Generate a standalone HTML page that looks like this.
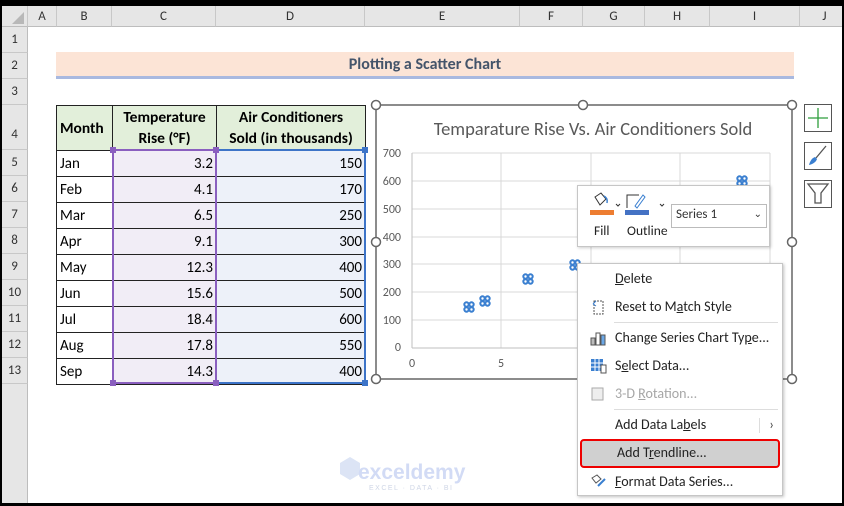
<!DOCTYPE html>
<html><head><meta charset="utf-8"><style>
*{margin:0;padding:0;box-sizing:border-box}
body{width:844px;height:506px;overflow:hidden;background:#000;font-family:Calibri,Carlito,"Liberation Sans",sans-serif;position:relative}
.a{position:absolute}
#sheet{position:absolute;left:2px;top:6px;width:840px;height:497px;background:#fff;overflow:hidden}
.ch{position:absolute;top:0;height:21px;background:#e6e6e6;border-right:1px solid #c8c8c8;border-bottom:1px solid #bdbdbd;font-size:13px;color:#333;text-align:center;line-height:21px}
.rh{position:absolute;left:0;width:26px;background:#e6e6e6;border-bottom:1px solid #c8c8c8;border-right:1px solid #bdbdbd;font-size:13px;color:#333;text-align:center}
td{border:1px solid #222;font-size:15px;padding:0 3px;height:26px}
.ml{font-size:14px;color:#222;padding-left:37px;height:28px;line-height:28px;position:relative}
.ml svg{position:absolute;left:12px;top:6px}
</style></head><body>
<div id="sheet">
<div class="ch" style="left:0;width:26px"></div>
<div class="a" style="left:10px;top:6px;width:0;height:0;border-left:12px solid transparent;border-bottom:12px solid #b8b8b8"></div>
<div class="ch" style="left:26px;width:29px">A</div>
<div class="ch" style="left:55px;width:55px">B</div>
<div class="ch" style="left:110px;width:104px">C</div>
<div class="ch" style="left:214px;width:149px">D</div>
<div class="ch" style="left:363px;width:155px">E</div>
<div class="ch" style="left:518px;width:63px">F</div>
<div class="ch" style="left:581px;width:62px">G</div>
<div class="ch" style="left:643px;width:65px">H</div>
<div class="ch" style="left:708px;width:90px">I</div>
<div class="ch" style="left:798px;width:50px">J</div>
<div class="rh" style="top:21px;height:497px;border-bottom:none"></div>
<div class="rh" style="top:21px;height:26px;line-height:26px">1</div>
<div class="rh" style="top:47px;height:26px;line-height:26px">2</div>
<div class="rh" style="top:73px;height:26px;line-height:26px">3</div>
<div class="rh" style="top:99px;height:45px;line-height:60px">4</div>
<div class="rh" style="top:144px;height:26px;line-height:26px">5</div>
<div class="rh" style="top:170px;height:26px;line-height:26px">6</div>
<div class="rh" style="top:196px;height:26px;line-height:26px">7</div>
<div class="rh" style="top:222px;height:26px;line-height:26px">8</div>
<div class="rh" style="top:248px;height:26px;line-height:26px">9</div>
<div class="rh" style="top:274px;height:26px;line-height:26px">10</div>
<div class="rh" style="top:300px;height:26px;line-height:26px">11</div>
<div class="rh" style="top:326px;height:26px;line-height:26px">12</div>
<div class="rh" style="top:352px;height:26px;line-height:26px">13</div>
<div class="a" style="left:54px;top:46px;width:738px;height:27px;background:#fce4d6;border-bottom:3px solid #a9b9e0;text-align:center;font-weight:bold;font-size:16px;color:#44546a;line-height:25px">Plotting a Scatter Chart</div>
<table class="a" style="left:54px;top:99px;border-collapse:collapse">
<tr style="background:#e2efda;font-weight:bold"><td style="width:56px;height:45px;font-size:15.5px">Month</td><td style="width:104px;text-align:center;line-height:21px;font-size:15.5px">Temperature<br>Rise (°F)</td><td style="width:149px;text-align:center;line-height:21px;font-size:15.5px">Air Conditioners<br>Sold (in thousands)</td></tr>
<tr><td>Jan</td><td style="text-align:right;background:#f1edf6">3.2</td><td style="text-align:right;background:#edf1f9">150</td></tr>
<tr><td>Feb</td><td style="text-align:right;background:#f1edf6">4.1</td><td style="text-align:right;background:#edf1f9">170</td></tr>
<tr><td>Mar</td><td style="text-align:right;background:#f1edf6">6.5</td><td style="text-align:right;background:#edf1f9">250</td></tr>
<tr><td>Apr</td><td style="text-align:right;background:#f1edf6">9.1</td><td style="text-align:right;background:#edf1f9">300</td></tr>
<tr><td>May</td><td style="text-align:right;background:#f1edf6">12.3</td><td style="text-align:right;background:#edf1f9">400</td></tr>
<tr><td>Jun</td><td style="text-align:right;background:#f1edf6">15.6</td><td style="text-align:right;background:#edf1f9">500</td></tr>
<tr><td>Jul</td><td style="text-align:right;background:#f1edf6">18.4</td><td style="text-align:right;background:#edf1f9">600</td></tr>
<tr><td>Aug</td><td style="text-align:right;background:#f1edf6">17.8</td><td style="text-align:right;background:#edf1f9">550</td></tr>
<tr><td>Sep</td><td style="text-align:right;background:#f1edf6">14.3</td><td style="text-align:right;background:#edf1f9">400</td></tr>
</table>
<div class="a" style="left:110px;top:143px;width:105px;height:235px;border:2px solid #8a5fbf"></div>
<div class="a" style="left:214px;top:143px;width:150px;height:235px;border:2px solid #3d74c8;border-left:none"></div>
<div class="a" style="left:108px;top:141px;width:6px;height:6px;background:#8a5fbf"></div>
<div class="a" style="left:211px;top:141px;width:6px;height:6px;background:#8a5fbf"></div>
<div class="a" style="left:108px;top:374px;width:6px;height:6px;background:#8a5fbf"></div>
<div class="a" style="left:211px;top:374px;width:6px;height:6px;background:#8a5fbf"></div>
<div class="a" style="left:360px;top:141px;width:6px;height:6px;background:#3d74c8"></div>
<div class="a" style="left:360px;top:374px;width:6px;height:6px;background:#3d74c8"></div>
</div>

<svg class="a" style="left:0;top:0" width="844" height="506">
<rect x="376" y="105" width="416" height="274" fill="#fff" stroke="#666" stroke-width="1.5"/>
<text x="593" y="135" font-size="18.5" fill="#595959" text-anchor="middle" font-family="Calibri,Carlito,Liberation Sans,sans-serif">Temparature Rise Vs. Air Conditioners Sold</text>
<g stroke="#d9d9d9" stroke-width="1">
<line x1="412" y1="153" x2="770" y2="153"/><line x1="412" y1="181" x2="770" y2="181"/><line x1="412" y1="209" x2="770" y2="209"/><line x1="412" y1="237" x2="770" y2="237"/><line x1="412" y1="264" x2="770" y2="264"/><line x1="412" y1="292" x2="770" y2="292"/><line x1="412" y1="320" x2="770" y2="320"/>
<line x1="501" y1="153" x2="501" y2="348"/><line x1="591" y1="153" x2="591" y2="348"/><line x1="680" y1="153" x2="680" y2="348"/><line x1="770" y1="153" x2="770" y2="348"/>
</g>
<line x1="412" y1="153" x2="412" y2="348" stroke="#bfbfbf"/><line x1="412" y1="348" x2="770" y2="348" stroke="#bfbfbf"/>
<g font-size="12" fill="#595959" text-anchor="end" font-family="Calibri,Carlito,Liberation Sans,sans-serif">
<text x="401" y="157">700</text><text x="401" y="185">600</text><text x="401" y="213">500</text><text x="401" y="241">400</text><text x="401" y="268">300</text><text x="401" y="296">200</text><text x="401" y="324">100</text><text x="401" y="351">0</text>
</g>
<g font-size="12" fill="#595959" text-anchor="middle" font-family="Calibri,Carlito,Liberation Sans,sans-serif"><text x="412" y="367">0</text><text x="501" y="367">5</text></g>
<g fill="none" stroke="#3a7fd0" stroke-width="2">
<g transform="translate(469,307)"><circle cx="-2.5" cy="-2.5" r="2.2"/><circle cx="2.5" cy="-2.5" r="2.2"/><circle cx="-2.5" cy="2.5" r="2.2"/><circle cx="2.5" cy="2.5" r="2.2"/></g>
<g transform="translate(485,301)"><circle cx="-2.5" cy="-2.5" r="2.2"/><circle cx="2.5" cy="-2.5" r="2.2"/><circle cx="-2.5" cy="2.5" r="2.2"/><circle cx="2.5" cy="2.5" r="2.2"/></g>
<g transform="translate(528,279)"><circle cx="-2.5" cy="-2.5" r="2.2"/><circle cx="2.5" cy="-2.5" r="2.2"/><circle cx="-2.5" cy="2.5" r="2.2"/><circle cx="2.5" cy="2.5" r="2.2"/></g>
<g transform="translate(575,265)"><circle cx="-2.5" cy="-2.5" r="2.2"/><circle cx="2.5" cy="-2.5" r="2.2"/><circle cx="-2.5" cy="2.5" r="2.2"/><circle cx="2.5" cy="2.5" r="2.2"/></g>
<g transform="translate(742,181)"><circle cx="-2.5" cy="-2.5" r="2.2"/><circle cx="2.5" cy="-2.5" r="2.2"/><circle cx="-2.5" cy="2.5" r="2.2"/><circle cx="2.5" cy="2.5" r="2.2"/></g>
</g>
<g fill="#fff" stroke="#666" stroke-width="1.5">
<circle cx="376" cy="105" r="4.5"/><circle cx="583" cy="105" r="4.5"/><circle cx="792" cy="105" r="4.5"/>
<circle cx="376" cy="242" r="4.5"/><circle cx="792" cy="242" r="4.5"/>
<circle cx="376" cy="379" r="4.5"/><circle cx="792" cy="379" r="4.5"/>
</g>
<g fill="#fff" stroke="#555" stroke-width="1">
<rect x="804.5" y="104.5" width="27" height="27"/><rect x="804.5" y="142.5" width="27" height="27"/><rect x="804.5" y="180.5" width="27" height="27"/>
</g>
<path d="M818 108v20M808 118h20" stroke="#2e9e3c" stroke-width="1.3"/>
<path d="M826 146l-10 12" stroke="#555" stroke-width="1.3"/><path d="M815 157c-3 1-5 4-6 8 4-1 7-3 8-6z" fill="#3a7fd0"/>
<path d="M808 184h20l-7 9v10h-6v-10z" fill="none" stroke="#555" stroke-width="1.3"/>
<path d="M340 463l10-6 10 6v11l-10 6-10-6z" fill="#dce4f5"/>
<text x="358" y="479" font-size="21" font-weight="bold" fill="#d2dbf5" font-family="Liberation Sans,sans-serif">exceldemy</text>
<text x="369" y="490" font-size="7" fill="#cfd6e6" font-family="Liberation Sans,sans-serif" letter-spacing="1.5">EXCEL · DATA · BI</text>
</svg>

<div class="a" style="left:577px;top:185px;width:193px;height:62px;background:#fff;border:1px solid #c6c6c6;box-shadow:1px 1px 3px rgba(0,0,0,.2)">
<svg class="a" style="left:0;top:0" width="193" height="62">
<path d="M17 11l6 -4 5 6-6 6z" fill="none" stroke="#333" stroke-width="1"/><path d="M26 10q4 2 3 7" stroke="#3a7fd0" fill="none" stroke-width="1.5"/>
<path d="M38 18l2 2 2-2" stroke="#333" fill="none"/>
<rect x="12" y="24" width="24" height="5" fill="#ed7d31"/>
<path d="M49 22v-13h12" stroke="#333" fill="none"/><path d="M57 20l8-11 2 2-8 11z" stroke="#3a7fd0" fill="none"/>
<path d="M82 18l2 2 2-2" stroke="#333" fill="none"/>
<rect x="47" y="24" width="24" height="5" fill="#4472c4"/>
</svg>
<div class="a" style="left:16px;top:36px;font-size:13.5px;color:#222">Fill</div>
<div class="a" style="left:49px;top:36px;font-size:13.5px;color:#222">Outline</div>
<div class="a" style="left:93px;top:18px;width:96px;height:24px;border:1px solid #bbb;font-size:13px;color:#333;padding:2px 4px">Series 1<span style="position:absolute;right:4px;top:2px;font-size:10px">⌄</span></div>
</div>

<div class="a" style="left:577px;top:263px;width:206px;height:233px;background:#fff;border:1px solid #c6c6c6;box-shadow:1px 1px 3px rgba(0,0,0,.25);padding-top:1px">
<div class="ml"><u>D</u>elete</div>
<div class="ml"><svg width="16" height="16"><path d="M4 2h9v13H4z" fill="none" stroke="#555" stroke-width="1" stroke-dasharray="2 1"/><path d="M3 5l3-3M3 5l3 2" stroke="#3a7fd0"/></svg>Reset to M<u>a</u>tch Style</div>
<div style="height:1px;background:#ddd;margin:1px 4px 1px 36px"></div>
<div class="ml"><svg width="18" height="16"><rect x="1" y="8" width="4" height="7" fill="#bbb" stroke="#555"/><rect x="6" y="3" width="4" height="12" fill="#fff" stroke="#555"/><rect x="11" y="5" width="4" height="10" fill="#6aa7e6" stroke="#555"/></svg>Change Series Chart Ty<u>p</u>e...</div>
<div class="ml"><svg width="18" height="16"><rect x="1" y="1" width="12" height="12" fill="#3a7fd0"/><path d="M1 5h12M1 9h12M5 1v12M9 1v12" stroke="#fff"/><rect x="11" y="7" width="5" height="8" fill="#fff" stroke="#555"/></svg>S<u>e</u>lect Data...</div>
<div class="ml" style="color:#a6a6a6"><svg width="16" height="16"><rect x="2" y="2" width="11" height="12" fill="#eee" stroke="#aaa"/></svg>3-D <u>R</u>otation...</div>
<div style="height:1px;background:#ddd;margin:1px 4px 1px 36px"></div>
<div class="ml">Add Data La<u>b</u>els<span style="position:absolute;right:8px;top:0;color:#444">›</span><span style="position:absolute;right:22px;top:7px;width:1px;height:15px;background:#ddd"></span></div>
<div class="ml" style="margin:0 2px;background:#d0d0d0;border:2.5px solid #e00;border-radius:4px;height:29px;line-height:24px;padding-left:35px">Add T<u>r</u>endline...</div>
<div class="ml"><svg width="18" height="16"><path d="M2 4l5-3 4 4-5 4z" fill="none" stroke="#555"/><path d="M8 12l7-7" stroke="#3a7fd0" stroke-width="2"/></svg><u>F</u>ormat Data Series...</div>
</div>
</body></html>
